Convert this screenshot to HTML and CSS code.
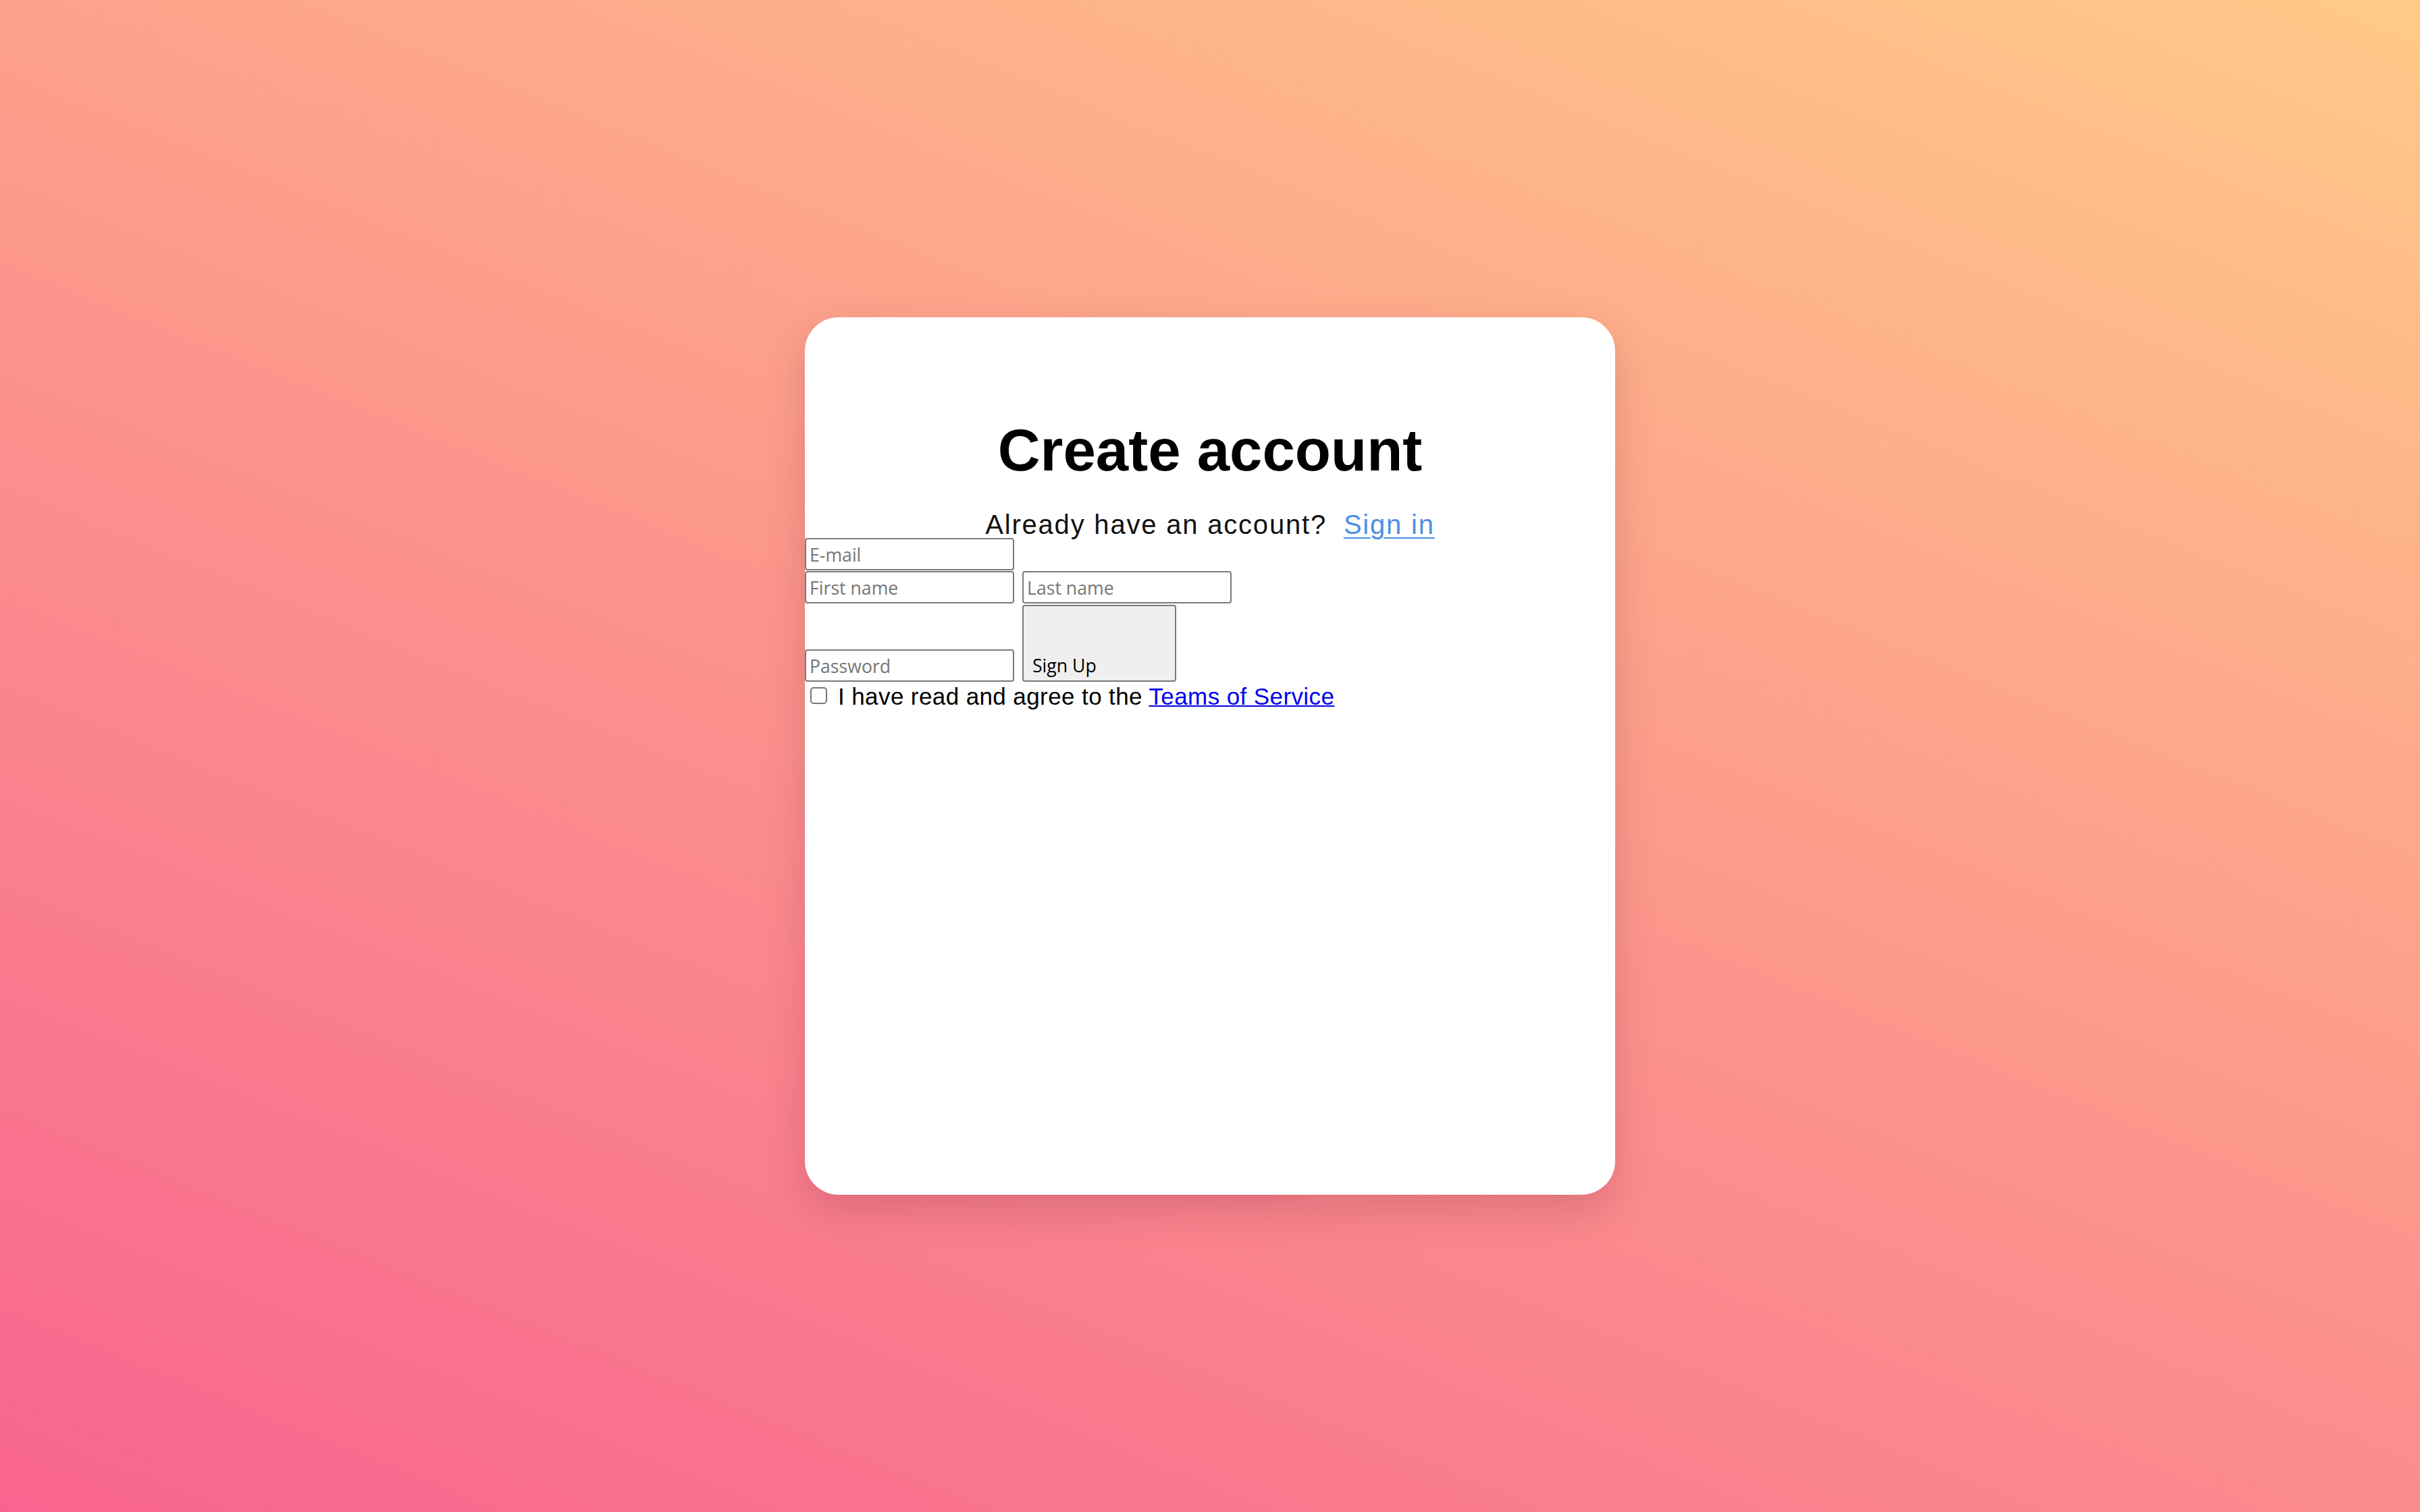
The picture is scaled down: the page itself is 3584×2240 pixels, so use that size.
FILE: index.html
```html
<!DOCTYPE html>
<html lang="en">
<head>
<meta charset="utf-8">
<title>Create account</title>
<link rel="stylesheet" href="styles.css">
</head>
<body>
<main class="page">
  <section class="card">
    <h1 class="title">Create account</h1>
    <p class="subtitle">Already have an account? <a href="#" class="signin">Sign in</a></p>
    <form class="form">
      <div class="row">
        <input class="field" type="email" placeholder="E-mail">
      </div>
      <div class="row row-second">
        <input class="field" type="text" placeholder="First name">
        <input class="field" type="text" placeholder="Last name">
      </div>
      <div class="row row-third">
        <input class="field" type="password" placeholder="Password">
        <button class="submit" type="button">Sign Up</button>
      </div>
      <label class="terms">
        <input class="check" type="checkbox">
        <span class="terms-text">I have read and agree to the <a href="#" class="tos">Teams of Service</a></span>
      </label>
    </form>
  </section>
</main>
</body>
</html>
```

FILE: styles.css
```css
html, body {
  margin: 0;
  padding: 0;
}

body {
  width: 3584px;
  height: 2240px;
  overflow: hidden;
  background: linear-gradient(22deg, #f8648f 0%, #fc968c 50%, #ffca88 100%);
  font-family: "Liberation Sans", Arial, sans-serif;
  color: #000;
}

.page {
  height: 2240px;
  display: flex;
  align-items: center;
  justify-content: center;
}

.card {
  box-sizing: border-box;
  width: 1200px;
  height: 1300px;
  padding-top: 147px;
  background: #fff;
  border-radius: 50px;
  box-shadow: 0 24px 60px rgba(120, 40, 60, 0.22);
}

.title {
  margin: 0;
  font-size: 87px;
  line-height: 100px;
  font-weight: 700;
  text-align: center;
  color: #000;
}

.subtitle {
  margin: 40px 0 0;
  font-size: 40px;
  line-height: 40px;
  letter-spacing: 1.8px;
  text-align: center;
  color: #111;
}

.signin {
  margin-left: 12px;
  color: #4a90e2;
  text-decoration: underline;
  text-decoration-thickness: 2px;
  text-underline-offset: 5px;
}

.form {
  display: flex;
  flex-direction: column;
  align-items: flex-start;
}

.row {
  display: flex;
  align-items: flex-end;
  gap: 12px;
}

.row-second {
  margin-top: 1px;
}

.row-third {
  margin-top: 2px;
}

.field {
  box-sizing: border-box;
  width: 310px;
  height: 48px;
  margin: 0;
  padding: 0 5px;
  border: 2px solid #7a7a7a;
  border-radius: 4px;
  background: #fff;
  font-family: "Open Sans", "Noto Sans", sans-serif;
  font-size: 26.67px;
  color: #000;
  outline: none;
}

.field::placeholder {
  color: #757575;
  opacity: 1;
}

.submit {
  box-sizing: border-box;
  width: 228px;
  height: 114px;
  margin: 0;
  padding: 0 13px 4px;
  display: flex;
  align-items: flex-end;
  justify-content: flex-start;
  border: 2px solid #7a7a7a;
  border-radius: 4px;
  background: #efefef;
  font-family: "Open Sans", "Noto Sans", sans-serif;
  font-size: 26.67px;
  line-height: 36px;
  color: #000;
}

.terms {
  margin-top: 2px;
  display: flex;
  align-items: flex-start;
  font-size: 35px;
  line-height: 40px;
  letter-spacing: 0.4px;
  color: #000;
}

.check {
  appearance: none;
  -webkit-appearance: none;
  box-sizing: border-box;
  width: 25px;
  height: 25px;
  margin: 6px 16px 0 8px;
  border: 2px solid #767676;
  border-radius: 5px;
  background: #fff;
}

.tos {
  color: #0000ee;
  text-decoration: underline;
  text-decoration-thickness: 2px;
}
```
